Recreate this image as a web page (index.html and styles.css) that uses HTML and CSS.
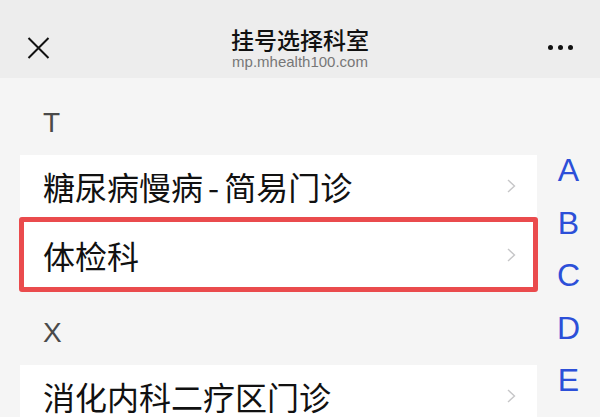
FILE: index.html
```html
<!DOCTYPE html>
<html lang="zh-CN">
<head>
  <meta charset="UTF-8">
  <meta name="viewport" content="width=device-width, initial-scale=1.0">
  <title>挂号选择科室</title>
  <link rel="stylesheet" href="styles.css">
</head>
<body>
  <!-- Barra superior -->
  <div class="top-bar">
    <div class="bar-side bar-left">
      <svg class="close-icon" width="23" height="22" viewBox="0 0 23 22">
        <path d="M1.5 1 L21.5 21 M21.5 1 L1.5 21" stroke="#111" stroke-width="2" fill="none"/>
      </svg>
    </div>
    <div class="bar-title">
      <div class="title">挂号选择科室</div>
      <div class="domain">mp.mhealth100.com</div>
    </div>
    <div class="bar-side bar-right">
      <span class="dot"></span><span class="dot"></span><span class="dot"></span>
    </div>
  </div>

  <div class="content">
    <!-- Lista de departamentos -->
    <div class="dept-list">
      <div class="section">
        <div class="section-title">T</div>
        <div class="dept-row">
          <span class="dept-name">糖尿病慢病<span class="dash">-</span>简易门诊</span>
          <svg class="chevron" width="9" height="14" viewBox="0 0 9 14"><path d="M1 1 L7.5 7 L1 13" stroke="#c6c6c8" stroke-width="1.4" fill="none"/></svg>
        </div>
        <div class="dept-row selected">
          <span class="dept-name">体检科</span>
          <svg class="chevron" width="9" height="14" viewBox="0 0 9 14"><path d="M1 1 L7.5 7 L1 13" stroke="#c6c6c8" stroke-width="1.4" fill="none"/></svg>
        </div>
      </div>
      <div class="section">
        <div class="section-title">X</div>
        <div class="dept-row">
          <span class="dept-name">消化内科二疗区门诊</span>
          <svg class="chevron" width="9" height="14" viewBox="0 0 9 14"><path d="M1 1 L7.5 7 L1 13" stroke="#c6c6c8" stroke-width="1.4" fill="none"/></svg>
        </div>
      </div>
    </div>

    <!-- Índice alfabético -->
    <div class="letter-index">
      <div class="letter">A</div>
      <div class="letter">B</div>
      <div class="letter">C</div>
      <div class="letter">D</div>
      <div class="letter">E</div>
    </div>
  </div>
</body>
</html>
```

FILE: styles.css
```css
/* Estilos generales */
body {
  margin: 0;
  padding: 0;
  font-family: "Liberation Sans", "Noto Sans CJK SC", sans-serif;
  background-color: #f5f5f5;
  color: #111;
  overflow: hidden;
}

/* Barra superior */
.top-bar {
  height: 78px;
  box-sizing: border-box;
  padding-top: 24px;
  background-color: #ededed;
  display: flex;
  align-items: flex-start;
}

.bar-side {
  width: 80px;
  display: flex;
}

.bar-left {
  padding-left: 27px;
  box-sizing: border-box;
}

.close-icon {
  margin-top: 13px;
}

.bar-right {
  justify-content: flex-end;
  padding-right: 27px;
  box-sizing: border-box;
  gap: 5px;
  margin-top: 21px;
}

.dot {
  width: 5px;
  height: 5px;
  border-radius: 50%;
  background-color: #111;
}

.bar-title {
  flex: 1;
  text-align: center;
}

.title {
  font-family: "Noto Sans CJK SC", sans-serif;
  font-size: 23px;
  font-weight: 500;
  line-height: 30px;
  color: #111;
}

.domain {
  font-size: 15px;
  line-height: 16px;
  color: #777;
}

/* Contenido */
.content {
  display: flex;
}

.dept-list {
  width: 517px;
  margin-left: 20px;
}

.section:first-child {
  margin-top: 4px;
}

.section-title {
  padding: 24px 0 15px 23px;
  font-size: 28px;
  line-height: 34px;
  color: #4a4a4a;
}

.dept-row {
  height: 62px;
  background-color: #fff;
  display: flex;
  align-items: center;
  justify-content: space-between;
  padding: 0 21px 0 23px;
}

.dept-row.selected {
  height: 65px;
  margin: 0 -1px;
  padding: 0 17px 0 19px;
  border: 5px solid #ea4b4d;
  border-radius: 3px;
}

.dept-name {
  font-family: "Noto Sans CJK SC", sans-serif;
  font-size: 32px;
  color: #111;
}

.dash {
  padding: 0 5px;
}

/* Índice */
.letter-index {
  flex: 1;
  padding-top: 66px;
  text-align: center;
}

.letter {
  font-size: 32px;
  line-height: 52.5px;
  color: #2c4fd8;
}
```
